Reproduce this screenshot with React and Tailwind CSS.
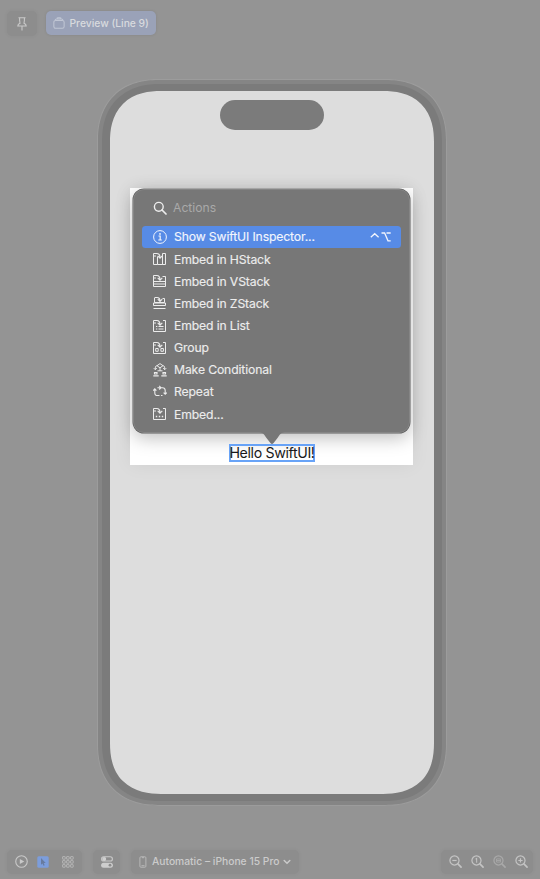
import React from "react";

function Glyph({ size = 14, sw = 1, className = "", children }) {
  return (
    <svg width={size} height={size} viewBox="0 0 14 14" fill="none" stroke="currentColor" strokeWidth={sw} className={"shrink-0 " + className}>
      {children}
    </svg>
  );
}

const info = (
  <Glyph>
    <circle cx="7" cy="7" r="6.4" />
    <path d="M5.5 6h1.7v4M5.3 10h3.5" strokeWidth="1.2" />
    <circle cx="7" cy="3.9" r=".9" fill="currentColor" stroke="none" />
  </Glyph>
);
const arrow = <path d="M.5 1.5h3.3C6 1.5 7 2.7 7 5.7M4.7 3.800 7 6.100 9.300 3.800" strokeWidth="1.150" />;
const hstack = (
  <Glyph>
    <path d="M.5 1.5v11h4v-8M4.5 12.5h5v-7M9.5 12.5h3v-11h-3v11M.5 4h2.5" />
    {arrow}
  </Glyph>
);
const vstack = (
  <Glyph>
    <path d="M.5 1.5v11h12v-10h-3M.5 7.500h12M.5 10h12M.5 4h2.5" />
    {arrow}
  </Glyph>
);
const zstack = (
  <Glyph>
    <path d="M1.500 2v4.500h10v-4h-2M.5 9.500h12v-2.500H.5zM.5 12.500h12" />
    <path d="M1.500 1.500h2.500C6 1.500 7 2.700 7 5M4.800 3.200 7 5.400l2.200-2.200" strokeWidth="1.150" />
  </Glyph>
);
const list = (
  <Glyph>
    <path d="M.5 1.500v11h12v-11h-2.500M.5 4h2.500M5.500 7.500h5M5.500 10h5M3 7.500h1.300M3 10h1.300" />
    {arrow}
  </Glyph>
);
const group = (
  <Glyph>
    <path d="M.5 1.500v11h12v-11h-2.500M.5 4h2.500M2.700 7.500h2.500v2.800H2.700zM7.900 7.500h2.500v2.800H7.900z" />
    {arrow}
  </Glyph>
);
const conditional = (
  <Glyph>
    <path d="M7 .6 10 2.700 7 4.800 4 2.700zM4 2.700C2.300 2.800 2.300 4 2.300 6.500M10 2.700c1.700.1 1.700 1.300 1.700 3.800M.8 5.200l1.500 1.500 1.500-1.500M10.200 5.200l1.500 1.500 1.500-1.500M7 4.800v3M4.500 7.800h5" />
    <path d="M1.500 9.500h2.500v1.500H1.500zM.3 12.800h5.400M10 9.500h2.500v1.500H10zM8.300 12.800h5.400" strokeWidth="1.150" />
  </Glyph>
);
const repeat = (
  <Glyph sw={1.1}>
    <path d="M6.500 10.500H4.500C2.600 10.500 1.800 9.500 1.800 7.700V4M.2 5.600l1.600-1.700 1.600 1.700M4.400 2.700h5c2 0 2.800 1 2.800 2.900v3.500M10.600 7.600l1.600 1.700 1.600-1.700M6.200.9 8 2.700 6.200 4.500" />
    <path d="M8 10.500h1.500" />
  </Glyph>
);
const embed = (
  <Glyph>
    <path d="M.5 1.500v11h12v-11h-2.500M.5 4h2.500" />
    {arrow}
    <path d="M2.800 9.500h1.400M5.800 9.500h1.400M8.800 9.500h1.400" strokeWidth="1.400" />
  </Glyph>
);

const items = [
  ["Show SwiftUI Inspector...", info],
  ["Embed in HStack", hstack],
  ["Embed in VStack", vstack],
  ["Embed in ZStack", zstack],
  ["Embed in List", list],
  ["Group", group],
  ["Make Conditional", conditional],
  ["Repeat", repeat],
  ["Embed...", embed],
];

function ActionsPopover() {
  return (
    <div className="absolute left-[3px] top-[1.5px] h-[244px] w-[277px] rounded-[11px] border border-[#858585] bg-[#777] shadow-[0_0_0_0.5px_#5e5e5e,0_5px_18px_rgba(0,0,0,0.26)]">
      <div className="flex h-[36px] items-center pl-[19px] text-[12.2px] text-[#a9a9a9]">
        <Glyph className="text-[#ededed]" sw={1.4}>
          <circle cx="5.8" cy="5.8" r="4.4" />
          <path d="m9 9 4 4" strokeLinecap="round" strokeWidth="1.7" />
        </Glyph>
        <span className="ml-[6px]">Actions</span>
      </div>
      <div className="px-[8px]">
        {items.map(([label, icon], i) => (
          <div
            key={label}
            className={
              "flex h-[22.15px] items-center pl-[11px] pr-[10px] text-[12.2px] tracking-[-0.13px] " +
              (i === 0 ? "rounded-[3.5px] bg-[#578be6] text-[#f2f5fd]" : "text-[#ececec]")
            }
          >
            {icon}
            <span className="ml-[7px] whitespace-nowrap pt-[1px] [-webkit-text-stroke:0.15px_currentColor]">{label}</span>
            {i === 0 && (
              <svg width="21" height="10" viewBox="0 0 21 10" fill="none" stroke="currentColor" strokeWidth="1.3" className="ml-auto">
                <path d="M.8 5.2 4.7 1.7l3.9 3.5M11.5 1h3.1l3.4 7.8h2.7M16.5 1h4.2" />
              </svg>
            )}
          </div>
        ))}
      </div>
      <svg width="28" height="13" viewBox="0 0 28 13" className="absolute left-[124px] top-[241.5px]">
        <path d="M0 0C5 0 6 2.5 8.5 6L12.4 11Q14 13 15.6 11L19.5 6C22 2.5 23 0 28 0Z" fill="#777" />
      </svg>
    </div>
  );
}

function Phone() {
  return (
    <div className="ml-[97px] mt-[43px] h-[726.5px] w-[349.5px] rounded-[62px] border border-[#9c9c9c] bg-[#858585] p-[4px] [corner-shape:superellipse(1.2)]">
      <div className="h-full rounded-[58px] bg-[#7b7b7b] px-[7.5px] pb-[7px] pt-[7px] [corner-shape:superellipse(1.2)]">
        <div className="flex h-full flex-col rounded-[51px] bg-[#dddddd] pt-[8.5px] [corner-shape:superellipse(1.25)]">
          <div className="ml-[110.4px] h-[30.5px] w-[104px] rounded-full bg-[#7b7b7b]" />
          <div className="relative ml-[20.5px] mt-[57.5px] flex h-[277.5px] w-[283px] items-end justify-center bg-white pb-[3px] pl-[1px] shadow-[0_0_18px_rgba(0,0,0,0.06)]">
            <ActionsPopover />
            <div className="relative flex h-[18px] w-[86px] items-center justify-center border-2 border-[#68a3f7] text-[14.2px] tracking-[-0.36px] whitespace-nowrap text-[#191919]">
              Hello SwiftUI!
            </div>
          </div>
        </div>
      </div>
    </div>
  );
}

const pill = "flex items-center rounded-[5px] bg-[#8d8d8d] shadow-[0_0_4px_rgba(0,0,0,0.05)] ";

function Zoom({ children, dim }) {
  return (
    <Glyph size={13} sw={1.3} className={dim ? "text-[#a9a9a9]" : "text-[#c4c4c4]"}>
      <circle cx="5.9" cy="5.9" r="4.9" />
      <path d="m9.6 9.6 3.4 3.4" strokeWidth="1.8" strokeLinecap="round" />
      {children}
    </Glyph>
  );
}

export default function App() {
  return (
    <div className="flex h-[879px] w-[540px] flex-col overflow-hidden bg-[#949494] font-[Inter,'Liberation_Sans',sans-serif]">
      <div className="flex gap-[9px] pl-[7px] pt-[11px]">
        <div className={pill + "h-[25px] w-[30px] justify-center text-[#c9c9c9]"}>
          <Glyph sw={1.1}>
            <path d="M3.5.8h7M4.6 1v2.2L5 6.3C3.4 7 2.8 7.9 2.8 9h8.4c0-1.1-.6-2-2.2-2.7l.4-3.1V1M7 9v4.6" />
          </Glyph>
        </div>
        <div className="flex h-[24px] w-[110px] items-center rounded-[5px] bg-[#9aa2b8] pl-[7px] text-[10.3px] font-medium text-[#d8dade] shadow-[0_0_3px_rgba(0,0,0,0.1)]">
          <Glyph size={12} sw={1.2} className="text-[#c0c6d4]">
            <rect x="1" y="4" width="12" height="9.2" rx="2" />
            <path d="M2.5 3.6c.2-1 .8-1.3 1.5-1.3h6c.7 0 1.3.3 1.5 1.3M4.5 1.8c.2-.8.7-1 1.2-1h2.6c.5 0 1 .2 1.2 1" />
          </Glyph>
          <span className="ml-[4.5px] whitespace-nowrap pt-[1px]">Preview (Line 9)</span>
        </div>
      </div>
      <Phone />
      <div className="mt-[44px] flex h-[24px] pl-[7px] pr-[7px]">
        <div className={pill + "w-[75px] pl-[8px] text-[#c9c9c9]"}>
          <Glyph size={13} sw={1.2}>
            <circle cx="7" cy="7" r="6.2" />
            <path d="M5.2 4.2v5.6L10 7z" fill="currentColor" stroke="none" />
          </Glyph>
          <svg width="12" height="12" viewBox="0 0 12 12" className="ml-[9px]">
            <rect x=".3" y=".3" width="11.4" height="11.4" rx="1.5" fill="#7c9ddb" />
            <path d="M4 2v6.800l1.500-1.300 1 2.300 1.200-.5-1-2.300h2z" fill="#687b9f" />
          </svg>
          <svg width="12" height="12" viewBox="0 0 12 12" fill="none" stroke="#bcbcbc" strokeWidth=".85" className="ml-[13px]">
            {[0.6, 4.6, 8.6].map((y) => [0.6, 4.6, 8.6].map((x) => <rect key={x + "-" + y} x={x} y={y} width="2.6" height="2.6" rx=".3" />))}
          </svg>
        </div>
        <div className={pill + "ml-[11px] w-[27px] justify-center"}>
          <svg width="12" height="12" viewBox="0 0 12 12" fill="none">
            <rect x=".6" y=".8" width="10.8" height="4.2" rx="2.1" stroke="#c9c9c9" strokeWidth="1.1" />
            <circle cx="3.2" cy="2.9" r="2" fill="#d0d0d0" />
            <rect x=".1" y="6.7" width="11.8" height="5" rx="2.5" fill="#cdcdcd" />
            <circle cx="9" cy="9.2" r="1.4" fill="#8b8b8b" />
          </svg>
        </div>
        <div className={pill + "ml-[11px] w-[168px] pl-[8px] text-[10.3px] font-medium text-[#cbcbcb]"}>
          <svg width="8" height="12" viewBox="0 0 8 12" fill="none" stroke="#b9b9b9">
            <rect x=".9" y=".8" width="6" height="10.4" rx="1" />
            <path d="M3 1.7h2M2.5 9.7h3" />
          </svg>
          <span className="ml-[5px] whitespace-nowrap pt-[1px]">Automatic – iPhone 15 Pro</span>
          <svg width="8" height="6" viewBox="0 0 8 6" fill="none" stroke="#cbcbcb" strokeWidth="1.5" strokeLinecap="round" className="ml-[4px]">
            <path d="m1.2 1.5 2.8 2.7 2.8-2.7" />
          </svg>
        </div>
        <div className={pill + "ml-auto w-[92px] gap-[9px] pl-[8px]"}>
          <Zoom><path d="M3.6 5.9h4.6" /></Zoom>
          <Zoom><path d="m4.9 4.4 1.2-.7v4.6" strokeWidth="1.1" /></Zoom>
          <Zoom dim><path d="M3.8 4.2h4.2v3.4H3.8zM3.8 5.9H8" strokeWidth=".9" /></Zoom>
          <Zoom><path d="M3.6 5.9h4.6M5.9 3.6v4.6" /></Zoom>
        </div>
      </div>
    </div>
  );
}
